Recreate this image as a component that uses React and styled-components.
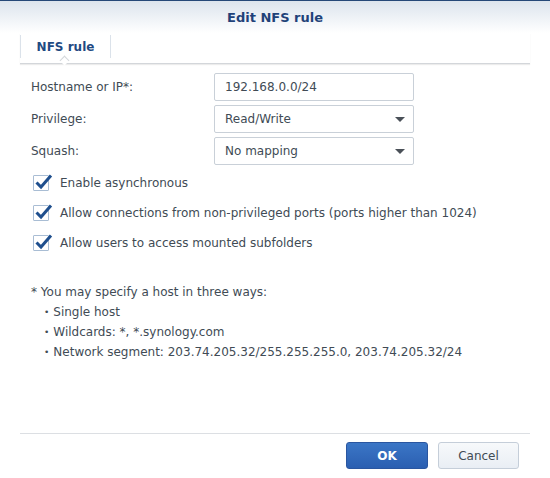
import React from "react"
import styled, { createGlobalStyle } from "styled-components"

const GlobalStyle = createGlobalStyle`
  html, body {
    margin: 0;
    padding: 0;
    background: #ffffff;
  }
  body {
    font-family: "DejaVu Sans", Verdana, sans-serif;
    font-size: 12px;
    color: #414b55;
  }
`

const Window = styled.div`
  width: 550px;
  height: 478px;
  display: flex;
  flex-direction: column;
  background: #fff;
  box-sizing: border-box;
`

const Header = styled.div`
  height: 32px;
  border-top: 1px solid #254878;
  background: linear-gradient(#dce4ed, #ffffff);
  display: flex;
  align-items: center;
  justify-content: center;
  font-weight: bold;
  font-size: 13px;
  color: #1f4279;
`

const TabBar = styled.div`
  margin: 0 20px;
  height: 30px;
  display: flex;
  border-bottom: 1px solid #d3d6da;
  box-shadow: 0 1px 1px #ececec;
`

const Tab = styled.div`
  position: relative;
  width: 89px;
  margin-top: 2px;
  height: 23px;
  border-left: 1px solid #dbe2ea;
  border-right: 1px solid #dbe2ea;
  display: flex;
  align-items: center;
  justify-content: center;
  font-weight: bold;
  font-size: 12px;
  color: #1f4a82;

  &::after {
    content: "";
    position: absolute;
    left: 40px;
    bottom: -6px;
    width: 6px;
    height: 6px;
    background: #fff;
    border-left: 1px solid #d3d6da;
    border-top: 1px solid #d3d6da;
    transform: rotate(45deg);
  }
`

const Body = styled.div`
  flex: 1;
  padding: 9px 20px 0 31px;
  display: flex;
  flex-direction: column;
`

const FieldRow = styled.div`
  display: flex;
  align-items: center;
  height: 28px;
  margin-bottom: 4px;
`

const Label = styled.div`
  width: 183px;
`

const Field = styled.div`
  position: relative;
  width: 200px;
  height: 28px;
  box-sizing: border-box;
  border: 1px solid #c9d0d8;
  border-radius: 2px;
  padding: 0 10px;
  display: flex;
  align-items: center;
  color: #414b55;
`

const Caret = styled.span`
  position: absolute;
  right: 8px;
  top: 11px;
  width: 0;
  height: 0;
  border-left: 5px solid transparent;
  border-right: 5px solid transparent;
  border-top: 5px solid #4a5058;
`

const CheckList = styled.div`
  display: flex;
  flex-direction: column;
  margin-top: -1px;
`

const CheckRow = styled.div`
  display: flex;
  align-items: center;
  height: 30px;
`

const Box = styled.span`
  position: relative;
  width: 16px;
  height: 16px;
  box-sizing: border-box;
  border: 1px solid #a9bdd4;
  border-radius: 1px;
  margin: 0 11px 0 2px;
  background: #fff;

  svg {
    position: absolute;
    left: 0;
    top: -3px;
  }
`

const Note = styled.div`
  margin-top: 24px;
  line-height: 20px;
`

const Bullets = styled.ul`
  margin: 0;
  padding: 0 0 0 13px;
  list-style: none;

  li {
    height: 20px;
  }

  li::before {
    content: "•";
    font-size: 9px;
    margin-right: 4px;
    vertical-align: 1px;
  }
`

const Footer = styled.div`
  margin: 0 20px;
  border-top: 1px solid #dcdfe3;
  height: 45px;
  box-sizing: border-box;
  display: flex;
  justify-content: flex-end;
  align-items: flex-start;
  padding: 8px 11px 0 0;
  gap: 10px;
`

const Button = styled.button`
  height: 27px;
  width: ${(p) => (p.$primary ? "82px" : "81px")};
  border-radius: 3px;
  font-family: "DejaVu Sans", Verdana, sans-serif;
  font-size: 12px;
  font-weight: ${(p) => (p.$primary ? "bold" : "normal")};
  color: ${(p) => (p.$primary ? "#ffffff" : "#414b55")};
  border: 1px solid ${(p) => (p.$primary ? "#2a56a0" : "#c5ced9")};
  background: ${(p) =>
    p.$primary
      ? "linear-gradient(#3b76c6, #2b5fb1)"
      : "linear-gradient(#f7f9fb, #e9eef4)"};
`

const Check = () => (
  <Box>
    <svg width="19" height="17" viewBox="0 0 19 17">
      <path d="M2.5 9.5 L7 14 L17 2.5" fill="none" stroke="#1f4f8e" strokeWidth="3" />
    </svg>
  </Box>
)

const options = [
  "Enable asynchronous",
  "Allow connections from non-privileged ports (ports higher than 1024)",
  "Allow users to access mounted subfolders",
]

export default function App() {
  return (
    <Window>
      <GlobalStyle />
      <Header>Edit NFS rule</Header>
      <TabBar>
        <Tab>NFS rule</Tab>
      </TabBar>
      <Body>
        <FieldRow>
          <Label>Hostname or IP*:</Label>
          <Field>192.168.0.0/24</Field>
        </FieldRow>
        <FieldRow>
          <Label>Privilege:</Label>
          <Field>
            Read/Write
            <Caret />
          </Field>
        </FieldRow>
        <FieldRow>
          <Label>Squash:</Label>
          <Field>
            No mapping
            <Caret />
          </Field>
        </FieldRow>
        <CheckList>
          {options.map((o) => (
            <CheckRow key={o}>
              <Check />
              {o}
            </CheckRow>
          ))}
        </CheckList>
        <Note>
          * You may specify a host in three ways:
          <Bullets>
            <li>Single host</li>
            <li>Wildcards: *, *.synology.com</li>
            <li>Network segment: 203.74.205.32/255.255.255.0, 203.74.205.32/24</li>
          </Bullets>
        </Note>
      </Body>
      <Footer>
        <Button $primary>OK</Button>
        <Button>Cancel</Button>
      </Footer>
    </Window>
  )
}
